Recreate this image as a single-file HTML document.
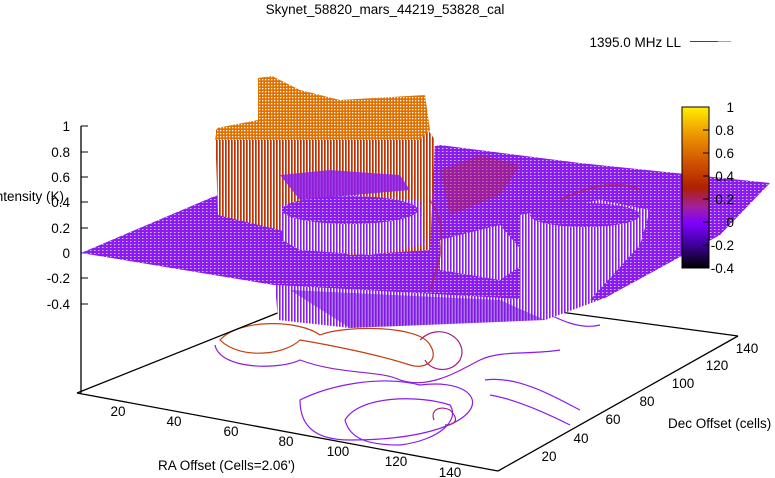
<!DOCTYPE html>
<html><head><meta charset="utf-8"><style>
html,body{margin:0;padding:0;background:#fff;width:775px;height:478px;overflow:hidden}
svg{display:block}
text{font-family:"Liberation Sans",sans-serif;font-size:13.5px;fill:#000}
</style></head><body>
<svg width="775" height="478" viewBox="0 0 775 478" xmlns="http://www.w3.org/2000/svg">
<defs>
<linearGradient id="cb" x1="0" y1="0" x2="0" y2="1">
<stop offset="0" stop-color="#ffef00"/><stop offset="0.15" stop-color="#f0a000"/><stop offset="0.35" stop-color="#d05000"/><stop offset="0.5" stop-color="#b02000"/><stop offset="0.62" stop-color="#a020a0"/><stop offset="0.72" stop-color="#8000ff"/><stop offset="0.85" stop-color="#4000a0"/><stop offset="1" stop-color="#000"/></linearGradient>
<pattern id="pp" width="4" height="3" patternUnits="userSpaceOnUse"><rect width="4" height="3" fill="#8a1cf0"/><rect x="2" y="1" width="1.5" height="1" fill="#fff" opacity="0.7"/></pattern>
<pattern id="pv" width="3" height="4" patternUnits="userSpaceOnUse"><rect width="3" height="4" fill="#fff"/><rect width="1.6" height="4" fill="#8a1cf0"/></pattern>
<pattern id="rv" width="3" height="4" patternUnits="userSpaceOnUse"><rect width="3" height="4" fill="#fff"/><rect width="1.7" height="4" fill="#c03000"/></pattern>
<pattern id="ov" width="3" height="3" patternUnits="userSpaceOnUse"><rect width="3" height="3" fill="#e07000"/><rect x="1" y="1" width="1.3" height="1.3" fill="#fff"/></pattern>
</defs>
<text x="385" y="14" text-anchor="middle" font-size="11.5">Skynet_58820_mars_44219_53828_cal</text>
<text x="681" y="47" text-anchor="end">1395.0 MHz LL</text>
<rect x="690" y="41" width="14" height="1" fill="#6a10f0"/><rect x="704" y="41" width="14" height="1" fill="#b02000"/><rect x="718" y="41" width="13" height="1" fill="#f0a000"/>

<!-- contours -->
<g fill="none" stroke-width="1.2">
<path d="M220,340 C240,318 300,320 320,335 C345,325 420,325 430,345 C440,360 425,370 410,365 C380,355 330,345 300,340 C285,355 240,360 220,340Z" stroke="#c04010"/>
<path d="M215,345 C220,370 280,370 300,360 C340,375 380,370 400,380 C430,390 460,370 480,360" stroke="#9020d0"/>
<path d="M420,340 C440,320 470,340 460,360 C450,375 430,370 425,360" stroke="#a02080"/>
<path d="M300,400 C330,385 380,375 420,385 C460,380 480,395 470,410 C460,425 420,440 350,440 C320,440 300,430 300,400Z" stroke="#8a1cf0"/>
<path d="M345,420 C360,395 420,395 450,405 C460,420 440,440 400,445 C370,445 350,440 345,420Z" stroke="#8a1cf0"/>
<path d="M480,360 C500,350 530,355 560,350 M485,380 C520,375 560,400 580,410 M490,395 C520,400 560,420 570,425" stroke="#8a1cf0"/>
<path d="M434,420 C430,410 440,405 450,410 C460,420 455,425 445,425" stroke="#a02080"/>
<path d="M540,310 C560,320 580,330 600,325" stroke="#8a1cf0"/>
</g>

<!-- base axes -->
<g stroke="#000" stroke-width="1.3" fill="none">
<line x1="81" y1="126" x2="81" y2="393"/>
<line x1="77" y1="393" x2="498" y2="471"/>
<line x1="498" y1="471" x2="738" y2="336"/>
<line x1="77" y1="393" x2="290" y2="308"/>
<line x1="738" y1="336" x2="560" y2="312"/>
</g>
<g stroke="#000" stroke-width="1">
<line x1="81" y1="126" x2="88" y2="126"/><line x1="81" y1="152" x2="88" y2="152"/><line x1="81" y1="177" x2="88" y2="177"/><line x1="81" y1="202" x2="88" y2="202"/><line x1="81" y1="228" x2="88" y2="228"/><line x1="81" y1="253" x2="88" y2="253"/><line x1="81" y1="278" x2="88" y2="278"/><line x1="81" y1="304" x2="88" y2="304"/>
</g>
<g text-anchor="end">
<text x="70" y="131">1</text><text x="70" y="157">0.8</text><text x="70" y="182">0.6</text><text x="70" y="207">0.4</text><text x="70" y="233">0.2</text><text x="70" y="258">0</text><text x="70" y="283">-0.2</text><text x="70" y="309">-0.4</text>
</g>
<text x="-8" y="201">Intensity (K)</text>
<g text-anchor="middle">
<text x="118" y="416">20</text><text x="174" y="426">40</text><text x="231" y="436">60</text><text x="286" y="446">80</text><text x="338" y="456">100</text><text x="396" y="466">120</text><text x="450" y="477">140</text>
<text x="549" y="461">20</text><text x="581" y="443">40</text><text x="613" y="424">60</text><text x="647" y="406">80</text><text x="683" y="388">100</text><text x="717" y="370">120</text><text x="747" y="353">140</text>
</g>
<text x="158" y="470">RA Offset (Cells=2.06')</text>
<text x="668" y="428">Dec Offset (cells)</text>

<!-- surface -->
<polygon points="81,253 215,196 440,145 580,163 770,183 720,235 605,298 540,318 350,326 280,286" fill="url(#pp)"/>
<polygon points="275,285 540,300 600,300 605,298 545,320 350,328 278,320" fill="url(#pv)"/>
<polygon points="290,290 500,300 545,320 350,328" fill="#7a18e0" opacity="0.6"/>
<polygon points="215,130 300,120 420,118 435,140 430,250 350,255 280,230 218,215" fill="url(#rv)"/>
<polygon points="258,78 272,76 300,90 340,100 425,95 430,130 420,140 215,140 217,128 258,120" fill="url(#ov)"/>
<polygon points="282,205 340,195 420,200 425,245 370,255 300,250 282,240" fill="url(#pv)"/>
<ellipse cx="350" cy="210" rx="68" ry="14" fill="url(#pp)"/>
<polygon points="280,175 330,170 400,175 410,190 300,200" fill="#8a1cf0" opacity="0.85"/>
<polygon points="440,170 480,155 520,165 500,195 450,215" fill="#b02040" opacity="0.45"/>
<polygon points="520,215 600,200 650,210 640,245 590,300 520,300" fill="url(#pv)"/>
<ellipse cx="585" cy="215" rx="55" ry="12" fill="url(#pp)"/>
<polygon points="440,240 500,225 530,260 500,280 440,270" fill="url(#pv)"/>
<path d="M560,200 C590,185 620,180 640,190 M430,200 C450,230 440,260 430,290" stroke="#b02050" stroke-width="2" fill="none" opacity="0.7"/>

<!-- colorbar -->
<rect x="682" y="107" width="27" height="161" fill="url(#cb)" stroke="#000" stroke-width="1"/>
<g stroke="#000"><line x1="703" y1="130" x2="709" y2="130"/><line x1="703" y1="153" x2="709" y2="153"/><line x1="703" y1="176" x2="709" y2="176"/><line x1="703" y1="199" x2="709" y2="199"/><line x1="703" y1="222" x2="709" y2="222"/><line x1="703" y1="245" x2="709" y2="245"/></g>
<g text-anchor="end"><text x="734" y="112">1</text><text x="734" y="135">0.8</text><text x="734" y="158">0.6</text><text x="734" y="181">0.4</text><text x="734" y="204">0.2</text><text x="734" y="227">0</text><text x="734" y="250">-0.2</text><text x="734" y="273">-0.4</text></g>
</svg>
</body></html>
